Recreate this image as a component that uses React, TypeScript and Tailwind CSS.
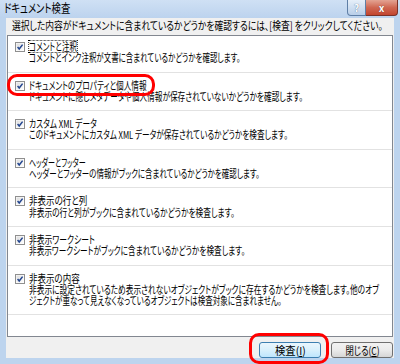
import React, { useLayoutEffect, useRef, useState } from 'react'

// widths (px) measured off the reference, used to squeeze each text to the same length
const items = [
    {
        title: 'コメントと注釈',
        tw: 48,
        desc: [{ t: 'コメントとインク注釈が文書に含まれているかどうかを確認します。', w: 211 }],
    },
    {
        title: 'ドキュメントのプロパティと個人情報',
        tw: 118,
        desc: [{ t: 'ドキュメントに隠しメタデータや個人情報が保存されていないかどうかを確認します。', w: 274 }],
    },
    {
        title: 'カスタム XML データ',
        tw: 68,
        desc: [{ t: 'このドキュメントにカスタム XML データが保存されているかどうかを検査します。', w: 259 }],
    },
    {
        title: 'ヘッダーとフッター',
        tw: 57,
        desc: [{ t: 'ヘッダーとフッターの情報がブックに含まれているかどうかを確認します。', w: 231 }],
    },
    {
        title: '非表示の行と列',
        tw: 58,
        desc: [{ t: '非表示の行と列がブックに含まれているかどうかを検査します。', w: 206 }],
    },
    {
        title: '非表示ワークシート',
        tw: 66,
        desc: [{ t: '非表示ワークシートがブックに含まれているかどうかを検査します。', w: 216 }],
    },
    {
        title: '非表示の内容',
        tw: 51,
        desc: [
            { t: '非表示に設定されているため表示されないオブジェクトがブックに存在するかどうかを検査します。他のオブ', w: 350 },
            { t: 'ジェクトが重なって見えなくなっているオブジェクトは検査対象に含まれません。', w: 253 },
        ],
    },
]

function Fit({
    w,
    children,
    className = '',
}: {
    w: number
    children: React.ReactNode
    className?: string
}) {
    const ref = useRef<HTMLSpanElement>(null)
    const [k, setK] = useState(1)

    useLayoutEffect(() => {
        const measure = () => {
            if (ref.current && ref.current.offsetWidth > 0) setK(w / ref.current.offsetWidth)
        }
        measure()
        document.fonts?.ready.then(measure)
    }, [w])

    return (
        <span
            ref={ref}
            className={'inline-block align-top whitespace-nowrap ' + className}
            style={{ transform: `scaleX(${k})` }}
        >
            {children}
        </span>
    )
}

function CheckBox() {
    return (
        <svg width="10" height="10" viewBox="0 0 10 10" className="shrink-0 mt-[1px]">
            <defs>
                <linearGradient id="cbg" x1="0" y1="0" x2="1" y2="1">
                    <stop offset="0" stopColor="#dcdcdc" />
                    <stop offset="1" stopColor="#ffffff" />
                </linearGradient>
            </defs>
            <rect x="0.5" y="0.5" width="9" height="9" fill="#fff" stroke="#8f8f8f" />
            <rect x="1.5" y="1.5" width="7" height="7" fill="url(#cbg)" />
            <path d="M2.6 5.1 L4.2 7 L7.6 2.6" fill="none" stroke="#22458f" strokeWidth="1.5" />
        </svg>
    )
}

export default function App() {
    return (
        <div
            className="relative w-[400px] h-[364px] flex flex-col bg-[#bdd4ee] text-[11px] text-black overflow-hidden [font-feature-settings:'palt'_1]"
            style={{ fontFamily: '"Noto Sans CJK JP", "Noto Sans", sans-serif' }}
        >
            {/* title bar */}
            <div className="h-[18px] flex items-start justify-between bg-gradient-to-b from-[#cfe0f4] to-[#bcd3ee]">
                <div className="pl-[4px] pt-[1px] leading-[13px] text-[12px]">
                    <Fit w={66} className="origin-left">ドキュメント検査</Fit>
                </div>
                <div className="flex mr-[2px]">
                    <div className="w-[19px] h-[16px] flex items-center justify-center border border-t-0 border-[#5f7fa6] rounded-bl-[4px] bg-gradient-to-b from-[#e6eff9] to-[#b9cfe9] text-[10px] font-bold text-white leading-none [text-shadow:0_0_1px_#34507a]">
                        ?
                    </div>
                    <div className="w-[32px] h-[16px] flex items-center justify-center border border-t-0 border-l-0 border-[#7a3128] rounded-br-[4px] bg-gradient-to-b from-[#e3a393] via-[#cf6752] to-[#c2442e] text-[10px] font-bold text-white leading-none [text-shadow:0_0_1px_#5a1a12]">
                        x
                    </div>
                </div>
            </div>

            {/* dialog body */}
            <div className="flex-1 mx-[6px] mb-[6px] bg-[#f0f0f0] flex flex-col">
                <div className="h-[17px] pl-[6px] pt-[2px] leading-[11px]">
                    <Fit w={371} className="origin-left">
                        選択した内容がドキュメントに含まれているかどうかを確認するには、[検査] をクリックしてください。
                    </Fit>
                </div>

                <div className="mx-[1px] h-[302px] bg-white border border-[#828790] flex flex-col">
                    {items.map((item, i) => (
                        <div
                            key={i}
                            className={
                                'flex gap-[4px] pl-[7px] pb-[8px] border-b border-[#e2e2e2] ' +
                                (i === 0 ? 'pt-[5px]' : 'pt-[7px]')
                            }
                        >
                            <CheckBox />
                            <div className="flex flex-col leading-[11.3px]">
                                <div className="h-[11.3px]">
                                    <Fit
                                        w={item.tw}
                                        className={
                                            'origin-left ' +
                                            (i === 0 ? 'outline outline-1 outline-dotted outline-black' : '')
                                        }
                                    >
                                        {item.title}
                                    </Fit>
                                </div>
                                {item.desc.map((d, j) => (
                                    <div key={j} className="h-[11.3px]">
                                        <Fit w={d.w} className="origin-left">
                                            {d.t}
                                        </Fit>
                                    </div>
                                ))}
                            </div>
                        </div>
                    ))}
                </div>

                <div className="flex justify-end gap-[10px] pt-[5px] pr-[1px]">
                    <button className="w-[62px] h-[16px] flex items-center justify-center rounded-[3px] border border-[#3c7fb1] bg-gradient-to-b from-[#eaf6fd] via-[#d9f0fc] to-[#bee6fd] text-[11px] leading-none">
                        <Fit w={31} className="origin-center">
                            検査(<span className="underline">I</span>)
                        </Fit>
                    </button>
                    <button className="w-[62px] h-[16px] flex items-center justify-center rounded-[3px] border border-[#707070] bg-gradient-to-b from-[#f2f2f2] via-[#ebebeb] to-[#d6d6d6] text-[11px] leading-none">
                        <Fit w={34} className="origin-center">
                            閉じる(<span className="underline">C</span>)
                        </Fit>
                    </button>
                </div>
            </div>

            {/* red highlight marks */}
            <div className="absolute left-[7px] top-[74px] w-[148px] h-[22px] border-[3px] border-[#f00] rounded-[10px]" />
            <div className="absolute left-[249px] top-[333px] w-[80px] h-[31px] border-[3px] border-[#f00] rounded-[10px]" />
        </div>
    )
}
